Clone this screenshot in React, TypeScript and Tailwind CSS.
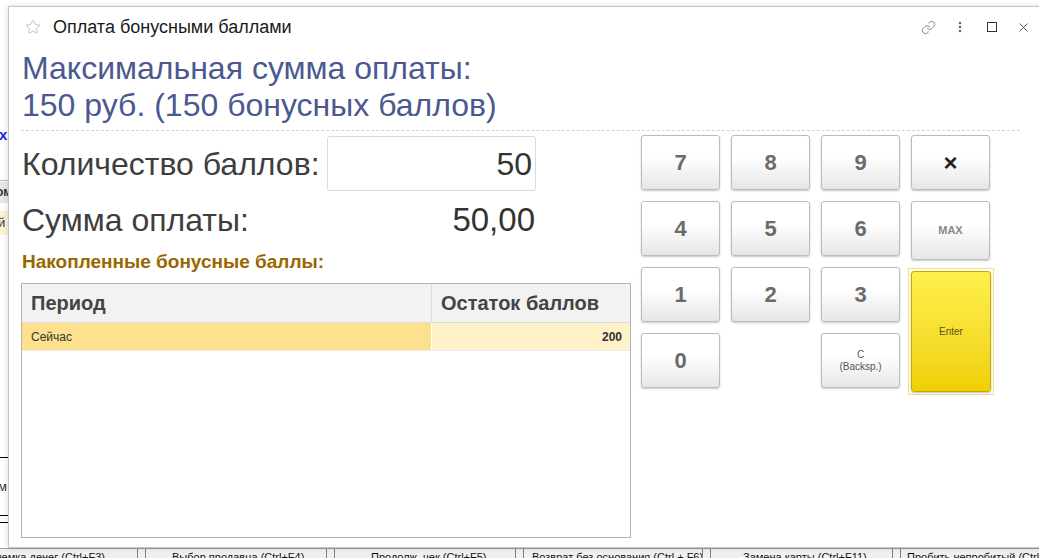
import React from 'react';
import clsx from 'clsx';
import { Star, Link, EllipsisVertical, X } from 'lucide-react';

// кнопка цифровой клавиатуры
const Key: React.FC<{ className?: string; children: React.ReactNode }> = ({ className, children }) => (
  <button
    className={clsx(
      'h-[55px] w-[79px] flex flex-col items-center justify-center rounded-[3px] border border-[#bcbcbc] bg-linear-to-b from-white from-40% to-[#e6e6e6] shadow-[0_1px_2px_rgba(0,0,0,0.22)]',
      className,
    )}
  >
    {children}
  </button>
);

const Digit: React.FC<{ d: string }> = ({ d }) => (
  <Key>
    <span className="text-[22px] font-bold text-[#6b6b6b] leading-none">{d}</span>
  </Key>
);

const footerButtons = [
  { w: 'w-[160px] -ml-[22px]', text: 'Выемка денег (Ctrl+F3)', cls: 'justify-end pr-[32px]' },
  { w: 'w-[182px]', text: 'Выбор продавца (Ctrl+F4)', cls: 'pl-[26px]' },
  { w: 'w-[182px]', text: 'Продолж. чек (Ctrl+F5)', cls: 'pl-[36px]' },
  { w: 'w-[180px]', text: 'Возврат без основания (Ctrl + F6)', cls: 'pl-[8px]' },
  { w: 'w-[183px]', text: 'Замена карты (Ctrl+F11)', cls: 'pl-[32px]' },
  { w: 'w-[200px]', text: 'Пробить непробитый (Ctrl+F12)', cls: 'pl-[6px]' },
];

export default function App() {
  return (
    <div className="relative w-[1039px] h-[558px] overflow-hidden bg-white font-['Liberation_Sans',Arial,sans-serif]">
      {/* Основное окно кассы под диалогом (видна только полоска слева) */}
      <div className="absolute left-0 top-0 w-[8px] h-[548px] overflow-hidden bg-white">
        <div className="h-[127px]" />
        <div className="text-[15px] font-bold text-[#1c1cf0] leading-[16px] -ml-[1px]">х</div>
        <div className="h-[37px]" />
        <div className="border-t border-[#b8b8b8] h-[2px]" />
        <div className="h-[21px] bg-[#e6e6e6] text-[12px] font-bold text-[#333] leading-[21px] whitespace-nowrap -ml-[4px]">ом</div>
        <div className="h-[8px]" />
        <div className="h-[24px] bg-[#fbf3d6] text-[13px] text-[#333] leading-[24px] -ml-[2px]">й</div>
        <div className="h-[222px]" />
        <div className="border-t border-black" />
        <div className="h-[22px]" />
        <div className="text-[13px] text-[#333] leading-[14px] -ml-[2px]">м</div>
        <div className="h-[21px]" />
        <div className="border-t border-black" />
        <div className="h-[6px]" />
        <div className="border-t border-black" />
      </div>

      {/* Нижняя панель кнопок */}
      <div className="absolute left-0 top-[548px] h-[22px] flex border-t border-[#a0a0a0] bg-[#f0f0f0] whitespace-nowrap">
        {footerButtons.map((b, i) => (
          <div
            key={i}
            className={clsx(
              'h-full flex shrink-0 border-x border-[#808080] mr-[7px] text-[11px] leading-[16px] text-[#111] overflow-hidden',
              b.w,
              b.cls,
            )}
          >
            {b.text}
          </div>
        ))}
      </div>

      {/* Диалог */}
      <div className="absolute left-[8px] top-[6px] w-[1040px] h-[542px] bg-white border border-[#c6c6c6] shadow-[0_0_6px_rgba(0,0,0,0.15)]">
        {/* Заголовок */}
        <div className="h-[40px] flex items-center">
          <Star className="ml-[16px] w-[16px] h-[16px] text-[#b4b4b4]" strokeWidth={1.2} />
          <span className="ml-[12px] text-[18px] text-[#1a1a1a]">Оплата бонусными баллами</span>
          <div className="ml-auto mr-[9px] flex items-center">
            <div className="w-[32px] flex justify-center">
              <Link className="w-[15px] h-[15px] text-[#777]" strokeWidth={1.4} />
            </div>
            <div className="w-[32px] flex justify-center">
              <EllipsisVertical className="w-[14px] h-[14px] text-[#666]" strokeWidth={2.4} />
            </div>
            <div className="w-[32px] flex justify-center">
              <div className="w-[10px] h-[10px] border-[1.5px] border-[#333]" />
            </div>
            <div className="w-[30px] flex justify-center">
              <X className="w-[15px] h-[15px] text-[#333]" strokeWidth={1.3} />
            </div>
          </div>
        </div>

        <div className="pl-[12px]">
          <div className="mt-[3px] pl-px text-[32px] leading-[37px] text-[#4b5990]">
            Максимальная сумма оплаты:
            <br />
            150 руб. (150 бонусных баллов)
          </div>

          <div className="mt-[6px] w-[999px] border-t border-dashed border-[#d2d2d2]" />

          <div className="mt-[4px] flex">
            {/* Левая часть */}
            <div className="w-[610px]">
              <div className="mt-[1px] w-[515px] h-[55px] flex items-center justify-between pl-px">
                <span className="text-[32px] text-[#3e3e3e]">Количество баллов:</span>
                <div className="w-[209px] h-[55px] border border-[#dadada] rounded-[3px] flex items-center justify-end pr-[3px] text-[32px] text-[#333]">
                  50
                </div>
              </div>

              <div className="mt-[9px] w-[515px] h-[40px] flex items-center justify-between pl-px">
                <span className="text-[32px] text-[#3e3e3e]">Сумма оплаты:</span>
                <span className="text-[33px] text-[#333] pr-px">50,00</span>
              </div>

              <div className="mt-[11px] pl-px text-[19px] leading-[22px] font-bold text-[#9a6600]">
                Накопленные бонусные баллы:
              </div>

              <div className="mt-[10px] h-[255px] border border-[#b4b4b4] flex flex-col">
                <div className="h-[39px] flex bg-[#f2f2f2] border-b border-[#dcdcdc] text-[20px] font-bold text-[#444]">
                  <div className="w-[410px] border-r border-[#dcdcdc] pl-[9px] flex items-center">Период</div>
                  <div className="flex-1 pl-[9px] flex items-center">Остаток баллов</div>
                </div>
                <div className="h-[28px] flex border-b border-[#ececec] text-[12px] text-[#333]">
                  <div className="w-[410px] bg-[#fde18e] border-r border-[#fff] pl-[9px] flex items-center">Сейчас</div>
                  <div className="flex-1 bg-[#fff2c8] pr-[8px] flex items-center justify-end font-bold">200</div>
                </div>
              </div>
            </div>

            {/* Клавиатура */}
            <div className="ml-[10px] grid grid-cols-[79px_79px_79px_79px] grid-rows-[55px_55px_55px_55px] gap-[11px] content-start">
              <Digit d="7" />
              <Digit d="8" />
              <Digit d="9" />
              <Key>
                <span className="text-[24px] font-bold text-[#1e1e1e] leading-none">×</span>
              </Key>
              <Digit d="4" />
              <Digit d="5" />
              <Digit d="6" />
              <Key className="h-[59px]">
                <span className="text-[11px] font-bold text-[#8a8a8a]">MAX</span>
              </Key>
              <Digit d="1" />
              <Digit d="2" />
              <Digit d="3" />
              <div className="row-span-2 -ml-[3px] mt-[1px] w-[86px] h-[127px] border border-[#f3e27a] p-[2px]">
                <button className="w-full h-full flex items-center justify-center rounded-[3px] border border-[#c9a600] bg-linear-to-b from-[#fff04a] to-[#efcf00] shadow-[0_1px_2px_rgba(0,0,0,0.25)]">
                  <span className="text-[10px] text-[#5a5020]">Enter</span>
                </button>
              </div>
              <Digit d="0" />
              <div />
              <Key>
                <span className="text-[10px] leading-[12px] text-[#555] text-center">
                  C
                  <br />
                  (Backsp.)
                </span>
              </Key>
            </div>
          </div>
        </div>
      </div>
    </div>
  );
}
